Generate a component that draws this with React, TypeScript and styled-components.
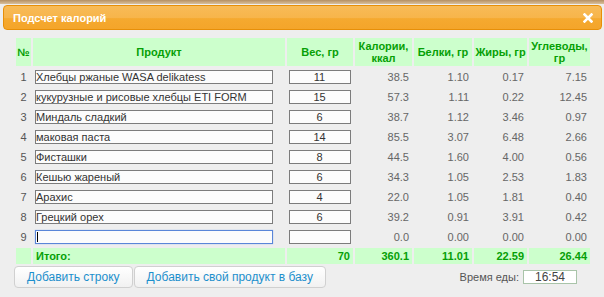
import styled, { createGlobalStyle } from 'styled-components';

const GlobalStyle = createGlobalStyle`
  body {
    margin: 0;
    background: #eeeeee;
    font-family: 'Liberation Sans', Arial, sans-serif;
  }
`;

const Backdrop = styled.div`
  height: 4px;
  background: linear-gradient(#b48f62, #d9c09c);
`;

const Dialog = styled.div`
  padding: 1px 2px 0 3px;
`;

const TitleBar = styled.div`
  box-sizing: border-box;
  display: flex;
  align-items: center;
  justify-content: space-between;
  height: 25px;
  padding: 0 8px 0 9px;

  background: linear-gradient(#f8bb57 0%, #f7b54b 50%, #f5a92f 55%, #f4a52a 100%);
  border: 1px solid #e78f08;
  border-radius: 4px;
`;

const Title = styled.span`
  font-size: 11px;
  font-weight: bold;
  color: #ffffff;
`;

const Close = styled.svg`
  width: 10px;
  height: 10px;
`;

const Content = styled.div`
  padding: 6px 10px 0 11px;
`;

const Table = styled.table`
  width: 578px;
  table-layout: fixed;
  border-collapse: separate;
  border-spacing: 2px;
  font-size: 11px;
`;

const Col = styled.col<{ $w: number }>`
  width: ${(p) => p.$w}px;
`;

const Th = styled.th`
  height: 28px;
  padding: 0 1px;
  background: #ccffcc;
  color: #06a006;
  font-weight: bold;
  font-size: 11px;
  line-height: 12px;
  text-align: center;
`;

const Td = styled.td<{ $align?: 'left' | 'center' | 'right' }>`
  height: 18px;
  padding: 0 3px;
  color: #666666;
  text-align: ${(p) => p.$align || 'right'};
  vertical-align: middle;
  white-space: nowrap;
`;

const NumTd = styled(Td)`
  padding: 0;
  color: #555555;
`;

const InputTd = styled(Td)`
  padding: 0 2px;
`;

const TotalTd = styled(Td)`
  height: 16px;
  background: #ccffcc;
  color: #06a006;
  font-weight: bold;
`;

const Field = styled.input<{ $w?: number; $center?: boolean; $focused?: boolean }>`
  box-sizing: border-box;
  display: block;
  width: ${(p) => (p.$w ? `${p.$w}px` : '100%')};
  height: 14px;
  margin: 0;
  padding: 0 1px 0 0;
  border: 1px solid ${(p) => (p.$focused ? '#5a86d8' : '#7c7c7c')};
  box-shadow: ${(p) => (p.$focused ? '0 0 1px #8fb0ea' : 'none')};
  border-radius: 0;
  background: #fcfcfc;
  font-family: 'Liberation Sans', Arial, sans-serif;
  font-size: 11px;
  line-height: 12px;
  color: #333333;
  text-align: ${(p) => (p.$center ? 'center' : 'left')};
  outline: none;
`;

const FocusBox = styled.span`
  position: relative;
  display: block;
  width: 238px;

  &::after {
    content: '';
    position: absolute;
    left: 2px;
    top: 2px;
    width: 1px;
    height: 10px;
    background: #000000;
  }
`;

const Footer = styled.div`
  display: flex;
  align-items: center;
`;

const Button = styled.button`
  box-sizing: border-box;
  height: 22px;
  margin: 0 1px 0 0;
  padding: 0 12px;
  background: linear-gradient(#ffffff, #f1f1f1);
  border: 1px solid #d0d0d0;
  border-radius: 4px;
  font-family: 'Liberation Sans', Arial, sans-serif;
  font-size: 12px;
  color: #1c8fcc;
`;

const TimeGroup = styled.div`
  display: flex;
  align-items: center;
  gap: 4px;
  margin-left: auto;
  margin-right: 15px;
  font-size: 11px;
  color: #555555;
`;

const TimeField = styled.input`
  box-sizing: border-box;
  width: 54px;
  height: 14px;
  margin: 0;
  padding: 0;
  border: 1px solid #a9c4a9;
  background: #ffffff;
  font-family: 'Liberation Sans', Arial, sans-serif;
  font-size: 12px;
  line-height: 12px;
  color: #444444;
  text-align: center;
  outline: none;
`;

type Row = { name: string; weight: string; kcal: string; p: string; f: string; c: string };

const rows: Row[] = [
  { name: 'Хлебцы ржаные WASA delikatess', weight: '11', kcal: '38.5', p: '1.10', f: '0.17', c: '7.15' },
  { name: 'кукурузные и рисовые хлебцы ETI FORM', weight: '15', kcal: '57.3', p: '1.11', f: '0.22', c: '12.45' },
  { name: 'Миндаль сладкий', weight: '6', kcal: '38.7', p: '1.12', f: '3.46', c: '0.97' },
  { name: 'маковая паста', weight: '14', kcal: '85.5', p: '3.07', f: '6.48', c: '2.66' },
  { name: 'Фисташки', weight: '8', kcal: '44.5', p: '1.60', f: '4.00', c: '0.56' },
  { name: 'Кешью жареный', weight: '6', kcal: '34.3', p: '1.05', f: '2.53', c: '1.83' },
  { name: 'Арахис', weight: '4', kcal: '22.0', p: '1.05', f: '1.81', c: '0.40' },
  { name: 'Грецкий орех', weight: '6', kcal: '39.2', p: '0.91', f: '3.91', c: '0.42' },
  { name: '', weight: '', kcal: '0.0', p: '0.00', f: '0.00', c: '0.00' },
];

const widths = [15, 252, 66, 57, 58, 53, 61];

export default function App() {
  return (
    <>
      <GlobalStyle />
      <Backdrop />
      <Dialog>
        <TitleBar>
          <Title>Подсчет калорий</Title>
          <Close viewBox="0 0 10 10">
            <path d="M1.5 1.5 L8.5 8.5 M8.5 1.5 L1.5 8.5" stroke="#ffffff" strokeWidth="2.6" strokeLinecap="square" />
          </Close>
        </TitleBar>
        <Content>
          <Table>
            <colgroup>
              {widths.map((w, i) => (
                <Col key={i} $w={w} />
              ))}
            </colgroup>
            <thead>
              <tr>
                <Th>№</Th>
                <Th>Продукт</Th>
                <Th>Вес, гр</Th>
                <Th>
                  Калории,
                  <br />
                  ккал
                </Th>
                <Th>Белки, гр</Th>
                <Th>Жиры, гр</Th>
                <Th>
                  Углеводы,
                  <br />
                  гр
                </Th>
              </tr>
            </thead>
            <tbody>
              {rows.map((r, i) => (
                <tr key={i}>
                  <NumTd $align="center">{i + 1}</NumTd>
                  <InputTd $align="left">
                    {i === rows.length - 1 ? (
                      <FocusBox>
                        <Field $w={238} $focused value={r.name} readOnly />
                      </FocusBox>
                    ) : (
                      <Field $w={238} value={r.name} readOnly />
                    )}
                  </InputTd>
                  <InputTd>
                    <Field $center value={r.weight} readOnly />
                  </InputTd>
                  <Td>{r.kcal}</Td>
                  <Td>{r.p}</Td>
                  <Td>{r.f}</Td>
                  <Td>{r.c}</Td>
                </tr>
              ))}
              <tr>
                <TotalTd />
                <TotalTd $align="left">Итого:</TotalTd>
                <TotalTd>70</TotalTd>
                <TotalTd>360.1</TotalTd>
                <TotalTd>11.01</TotalTd>
                <TotalTd>22.59</TotalTd>
                <TotalTd>26.44</TotalTd>
              </tr>
            </tbody>
          </Table>
          <Footer>
            <Button>Добавить строку</Button>
            <Button>Добавить свой продукт в базу</Button>
            <TimeGroup>
              Время еды:
              <TimeField value="16:54" readOnly />
            </TimeGroup>
          </Footer>
        </Content>
      </Dialog>
    </>
  );
}
